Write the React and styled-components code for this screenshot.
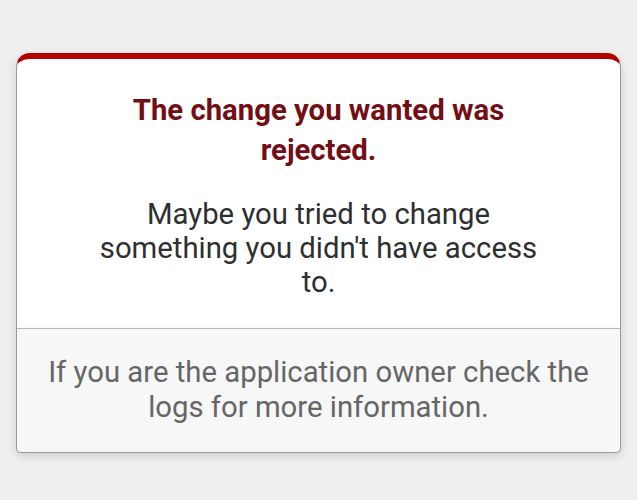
import React from "react";
import styled, { createGlobalStyle } from "styled-components";

const GlobalStyle = createGlobalStyle`
  html, body {
    margin: 0;
    padding: 0;
    background: #efefef;
  }
  body {
    font-family: Roboto, "Liberation Sans", Arial, sans-serif;
    color: #2e2f30;
    text-align: center;
  }
`;

const Page = styled.div`
  min-height: 500px;
  padding-top: 53px;
  box-sizing: border-box;
`;

const Dialog = styled.div`
  width: 95%;
  margin: 0 auto;
`;

const Body = styled.div`
  background: #fff;
  border: 1px solid #ccc;
  border-left-color: #999;
  border-right-color: #999;
  border-bottom-color: #bbb;
  border-top: 6px solid #b00100;
  border-top-left-radius: 14px;
  border-top-right-radius: 14px;
  padding: 31px 12% 0;
  box-shadow: 0 3px 8px rgba(50, 50, 50, 0.17);
`;

const Title = styled.h1`
  margin: 0 0 27px;
  font-size: 29.3px;
  line-height: 40px;
  font-weight: 700;
  color: #730e15;
`;

const Message = styled.p`
  margin: 0;
  padding-bottom: 29px;
  font-size: 29.3px;
  line-height: 34px;
`;

const Footer = styled.p`
  margin: 0;
  padding: 26px 20px 27px;
  background: #f7f7f7;
  border: 1px solid #999;
  border-top: none;
  border-bottom-left-radius: 5px;
  border-bottom-right-radius: 5px;
  color: #666;
  font-size: 29.3px;
  line-height: 35px;
  box-shadow: 0 3px 8px rgba(50, 50, 50, 0.17);
`;

export default function App() {
  return (
    <Page>
      <GlobalStyle />
      <Dialog>
        <Body>
          <Title>The change you wanted was rejected.</Title>
          <Message>
            Maybe you tried to change something you didn't have access to.
          </Message>
        </Body>
        <Footer>
          If you are the application owner check the logs for more
          information.
        </Footer>
      </Dialog>
    </Page>
  );
}
